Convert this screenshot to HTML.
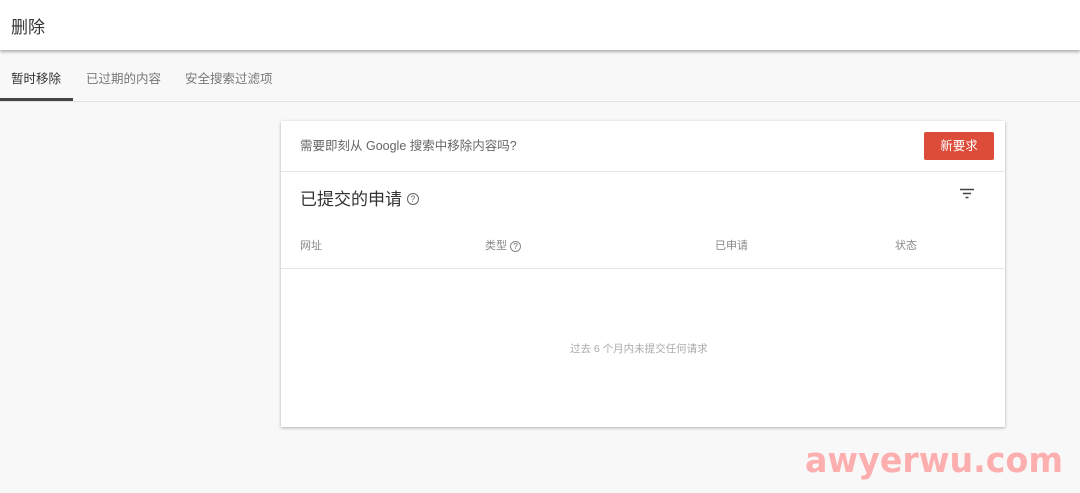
<!DOCTYPE html>
<html><head><meta charset="utf-8"><style>
*{margin:0;padding:0;box-sizing:border-box}
body{width:1080px;height:493px;background:#f8f8f8;font-family:"Liberation Sans","Noto Sans CJK SC",sans-serif;position:relative;overflow:hidden;color:#333}
.hdr{position:absolute;left:0;top:0;width:1080px;height:50px;background:#fff;box-shadow:0 2px 3px rgba(0,0,0,.3);z-index:2}
.hdr span{position:absolute;left:11px;top:13px;font-size:17px;color:#333}
.tabs{position:absolute;top:50px;left:0;width:1080px;height:52px;border-bottom:1px solid #e2e2e2}
.tab{position:absolute;top:18px;font-size:12.5px;color:#777}
.ind{position:absolute;left:0;top:98px;width:73px;height:3px;background:#444}
.card{position:absolute;left:281px;top:121px;width:724px;height:306px;background:#fff;box-shadow:0 1px 3px rgba(0,0,0,.3)}
.t{position:absolute;white-space:nowrap}
.btn{position:absolute;left:643px;top:11px;width:70px;height:28px;background:#dd4b39;border-radius:2px;color:#fff;font-size:12.5px;text-align:center;line-height:28px}
.line{position:absolute;left:0;width:724px;height:1px;background:#e6e6e6}
.q{display:inline-block;width:12px;height:12px;border:1.3px solid #666;border-radius:50%;font-size:9px;line-height:10px;text-align:center;vertical-align:middle;color:#666}
.wm{position:absolute;left:805px;top:441px;font-family:"DejaVu Sans",sans-serif;font-weight:bold;font-size:35px;color:#fdaeae;letter-spacing:0;transform:scaleX(0.95);transform-origin:left top;white-space:nowrap}
</style></head><body>
<div class="hdr"><span>删除</span></div>
<div class="tabs">
<div class="tab" style="left:11px;color:#333">暂时移除</div>
<div class="tab" style="left:86px">已过期的内容</div>
<div class="tab" style="left:185px">安全搜索过滤项</div>
</div>
<div class="ind"></div>
<div class="card">
<div class="t" style="left:19px;top:14px;font-size:12.5px;color:#666">需要即刻从 Google 搜索中移除内容吗?</div>
<div class="btn">新要求</div>
<div class="line" style="top:50px"></div>
<div class="t" style="left:19px;top:64px;font-size:17px;color:#333">已提交的申请 <span class="q" style="margin-top:-3px">?</span></div>
<svg class="t" style="left:678px;top:67px" width="16" height="12"><path d="M1 1.5h14M4 5.5h8M6.5 9.5h3" stroke="#444" stroke-width="1.6"/></svg>
<div class="t" style="left:19px;top:116px;font-size:11px;color:#888">网址</div>
<div class="t" style="left:204px;top:116px;font-size:11px;color:#888">类型 <span class="q" style="width:11px;height:11px;font-size:8px;line-height:9px;border-color:#888">?</span></div>
<div class="t" style="left:434px;top:116px;font-size:11px;color:#888">已申请</div>
<div class="t" style="left:614px;top:116px;font-size:11px;color:#888">状态</div>
<div class="line" style="top:147px"></div>
<div class="t" style="left:289px;top:220px;font-size:10.5px;color:#aaa">过去 6 个月内未提交任何请求</div>
</div>
<div class="wm">awyerwu.com</div>
</body></html>
